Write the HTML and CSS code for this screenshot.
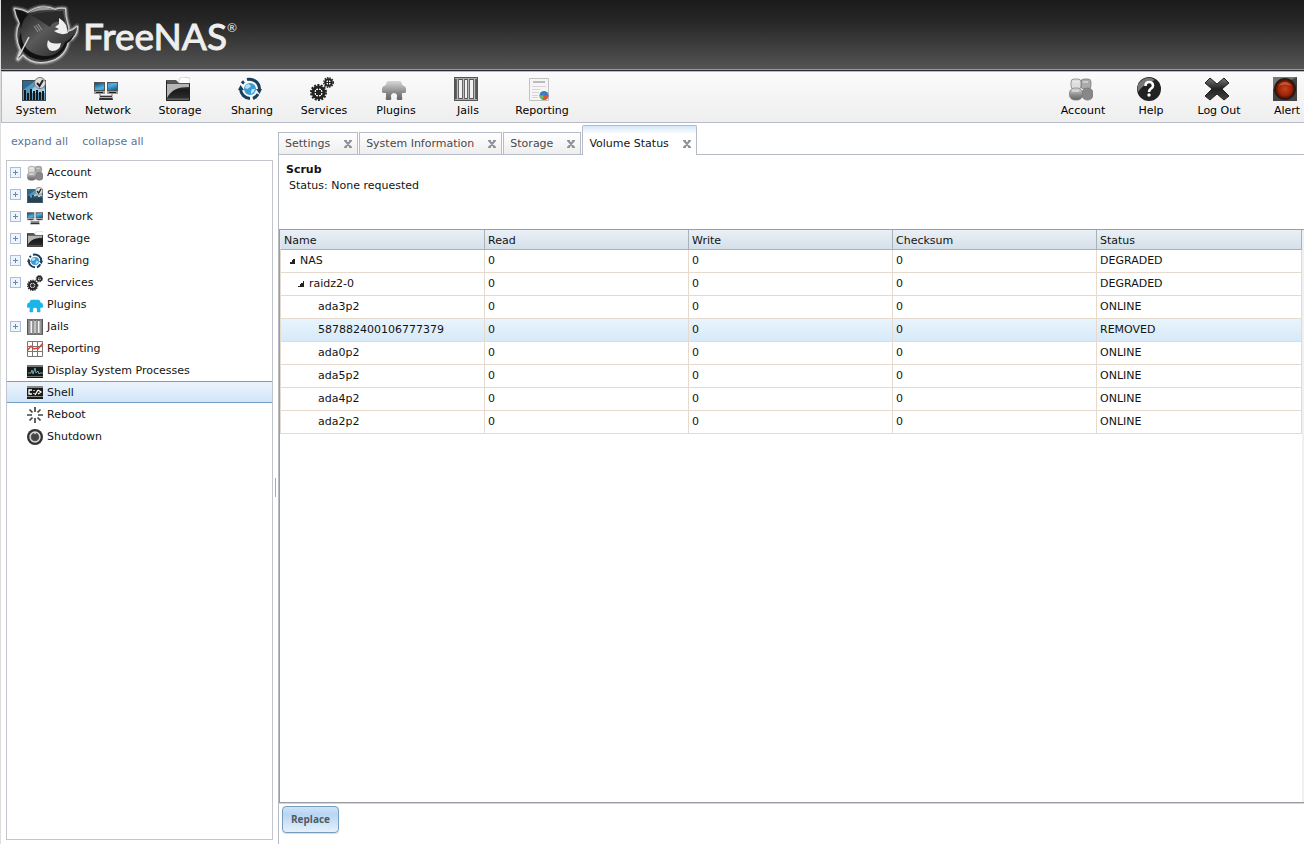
FILE: index.html
```html
<!DOCTYPE html>
<html lang="en">
<head>
    <meta charset="UTF-8">
    <meta name="viewport" content="width=device-width, initial-scale=1.0">
    <title>FreeNAS - Volume Status</title>
    <link rel="stylesheet" href="styles.css">
</head>
<body>
    <!-- Icon sprite -->
    <svg class="sprite" aria-hidden="true">
        <defs>
            <linearGradient id="gDark" x1="0" y1="0" x2="0" y2="1"><stop offset="0" stop-color="#777"/><stop offset=".5" stop-color="#222"/><stop offset="1" stop-color="#444"/></linearGradient>
            <linearGradient id="gGrey" x1="0" y1="0" x2="0" y2="1"><stop offset="0" stop-color="#d8d8d8"/><stop offset=".6" stop-color="#8a8a8a"/><stop offset="1" stop-color="#666"/></linearGradient>
            <linearGradient id="gBlue" x1="0" y1="0" x2="1" y2="1"><stop offset="0" stop-color="#0d4a70"/><stop offset=".5" stop-color="#4fb2e4"/><stop offset="1" stop-color="#0b5c92"/></linearGradient>
            <linearGradient id="gFolder" x1="0" y1="0" x2="0" y2="1"><stop offset="0" stop-color="#555"/><stop offset=".4" stop-color="#1a1a1a"/><stop offset=".8" stop-color="#2a2a2a"/><stop offset="1" stop-color="#888"/></linearGradient>
            <radialGradient id="gRed"><stop offset="0" stop-color="#c8401c"/><stop offset=".7" stop-color="#9c2408"/><stop offset="1" stop-color="#4a0e02"/></radialGradient>
            <linearGradient id="gFish" x1="0" y1="0" x2="1" y2="1"><stop offset="0" stop-color="#161616"/><stop offset=".45" stop-color="#5a5a5a"/><stop offset="1" stop-color="#1a1a1a"/></linearGradient>
        </defs>
        <symbol id="i-system" viewBox="0 0 24 24">
            <path fill="#3a4852" d="M0 3h24v21H0z"/>
            <path fill="#5596bd" d="M1 4h22v19H1z"/>
            <path fill="#2c6a92" d="M1 4h12L1 13z"/>
            <path fill="#9dcbe4" d="M9 13l7-6 7 5v4H9z"/>
            <path stroke="#14181b" stroke-width="2" d="M3 13v10M6 16v7M9 12v11M12 14v9M15 13v10M18 15v8M21 14v9"/>
            <circle cx="18" cy="6" r="5.500" fill="#dedede" stroke="#777"/>
            <path fill="none" stroke="#222" stroke-width="2" d="M15 6l2.500 3L21 3"/>
        </symbol>
        <symbol id="i-network" viewBox="0 0 24 24">
            <path fill="#555" d="M0 5h11v9H0zM13 5h11v9H13z"/>
            <path fill="url(#gBlue)" d="M1 6h9v7H1zM14 6h9v7h-9z"/>
            <path fill="#999" d="M0 14h11v3H0zM13 14h11v3H13z"/>
            <path fill="#222" d="M2 15h7v1H2zM15 15h7v1h-7z"/>
            <path fill="none" stroke="#777" d="M6 17v2h12v-2"/>
            <path fill="#333" d="M6 19h12l1 4H5z"/><path fill="#aaa" d="M6 20h12v1H6z"/>
        </symbol>
        <symbol id="i-storage" viewBox="0 0 24 24">
            <path fill="#555" d="M0 3h10l3 3v4H0z"/>
            <path fill="#fff" stroke="#aaa" stroke-width=".5" d="M13 2l3-2 8 1v7H13z"/>
            <path fill="url(#gFolder)" d="M0 6h24v18H0z"/>
            <path fill="#b5b5b5" d="M1 7h22v3C12 10 5 13 1 21z"/>
            <path fill="none" stroke="#222" d="M.5 4v19.500h23V6.500"/>
        </symbol>
        <symbol id="i-sharing" viewBox="0 0 24 24">
            <g fill="none" stroke="#173f5c" stroke-width="3">
                <path d="M9 2.500A10 10 0 0 1 21.500 12"/><path d="M15 21.500A10 10 0 0 0 20 17"/><path d="M12 21.500A10 10 0 0 1 2.500 12"/><path d="M4 6.500A10 10 0 0 1 6 4.500"/>
            </g>
            <path fill="#173f5c" d="M18 12h6l-2.500 5zM0 13h6L2.500 8z"/>
            <circle cx="12" cy="12" r="6" fill="#3a9ad2"/>
            <path fill="#b9e2f6" d="M8 8l3-1 2 2-2 2-2 1-2-1zM14 12l3 0-1 3-3 2 0-3z"/>
        </symbol>
        <symbol id="i-services" viewBox="0 0 24 24">
            <g fill="none" stroke="#222">
                <circle cx="8.500" cy="15.500" r="7.500" stroke-width="2" stroke-dasharray="2 1.400"/>
                <circle cx="8.500" cy="15.500" r="5.500" stroke-width="3"/>
                <circle cx="8.500" cy="15.500" r="2" stroke-width="1.500"/>
                <path d="M8.500 10v11M3 15.500h11M5 12l7 7M12 12l-7 7"/>
                <circle cx="18.500" cy="5.500" r="4.700" stroke-width="1.500" stroke-dasharray="1.500 1"/>
                <circle cx="18.500" cy="5.500" r="3.300" stroke-width="2"/>
                <path d="M18.500 3v5M16 5.500h5"/>
            </g>
        </symbol>
        <symbol id="i-plugins" viewBox="0 0 24 24">
            <path d="M4 8q0-4 3-4h10q3 0 3 4 4 1 4 4v3q0 1-2 1h-2v4q1 3-1 3h-3q-2 0-1-3v-2q-1-2-3-2t-3 2v2q1 3-1 3H5q-2 0-1-3v-4H2q-2 0-2-1v-3q0-3 4-4z"/>
        </symbol>
        <symbol id="i-jails" viewBox="0 0 24 24">
            <path fill="#555" d="M0 0h24v24H0z"/><path fill="#f2f2f2" d="M2 3h20v18H2z"/>
            <path stroke="#666" stroke-width="3" d="M3.500 2v20M9.500 2v20M14.500 2v20M20.500 2v20"/>
            <path stroke="#bbb" d="M3.500 2v20M9.500 2v20M14.500 2v20M20.500 2v20"/>
            <path stroke="#aaa" d="M1 1.500h22M1 22.500h22"/>
        </symbol>
        <symbol id="i-report" viewBox="0 0 24 24">
            <path fill="#f5f5f5" stroke="#c2c2c2" d="M1.500 1.500h19v22h-19z"/>
            <path stroke="#bbb" stroke-width="2" d="M5 5h12"/>
            <path stroke="#d5d5d5" d="M4 9.500h14M4 12.500h8M4 15.500h7M4 18.500h6M4 20.500h6"/>
            <circle cx="16" cy="18.500" r="4.500" fill="#3d7cc4"/><path fill="#e0552d" d="M16 18.500h4.500a4.500 4.500 0 0 1-6 4.200z"/><path fill="#74b854" d="M16 18.500l-1.500 4.200a4.500 4.500 0 0 1-3-4.200z"/>
        </symbol>
        <symbol id="i-account" viewBox="0 0 24 24">
            <g stroke="#777" stroke-width=".7">
                <rect x="12" y="2" width="10" height="10" rx="3" fill="#aaa"/><rect x="13" y="11" width="11" height="12" rx="5" fill="#888"/>
                <rect x="2" y="2" width="10" height="10" rx="3" fill="#ddd"/><rect x="0.500" y="11" width="13" height="12" rx="5" fill="url(#gGrey)"/>
            </g>
            <path stroke="#eee" d="M4 5h6M14 5h5M3 14h7"/>
        </symbol>
        <symbol id="i-help" viewBox="0 0 24 24">
            <circle cx="12" cy="12" r="12" fill="#222"/>
            <path fill="#777" d="M1 15A11 11 0 0 1 18 3Q6 7 1 15z"/>
            <path fill="none" stroke="#fff" stroke-width="2.600" d="M8.500 9q0-4 3.700-4T16 8.500q0 2-2 3.200t-2 3.300"/><circle cx="12" cy="18" r="1.700" fill="#fff"/>
        </symbol>
        <symbol id="i-logout" viewBox="0 0 24 24">
            <path fill="url(#gDark)" stroke="#222" d="M5 1l7 6 7-6 5 5-7 6 7 7-5 4-7-6-7 6-5-4 7-7-7-6z"/>
        </symbol>
        <symbol id="i-alert" viewBox="0 0 24 24">
            <path fill="#444" d="M0 0h24v24H0z"/><path fill="#777" d="M0 0h24L0 12z"/>
            <circle cx="12" cy="12" r="11" fill="#261b18"/><circle cx="12" cy="12" r="9.500" fill="url(#gRed)"/>
            <path fill="#d8765a" opacity=".6" d="M5 9q7-8 14 0-7-3-14 0z"/>
        </symbol>
        <symbol id="i-graph" viewBox="0 0 16 16">
            <path fill="none" stroke="#777" d="M.5.5h15v15H.5zM5.500 0v16M10.500 0v16M0 5.500h16M0 10.500h16"/>
            <path fill="none" stroke="#e0432c" stroke-width="1.500" d="M0 10l4-5 3 3 3-1 1 1 5-6"/>
        </symbol>
        <symbol id="i-process" viewBox="0 0 16 16">
            <path fill="#1a1a1a" d="M0 2h16v13H0z"/><path fill="#777" d="M0 2h16v2H0zM0 13h16v1H0z"/>
            <path fill="none" stroke="#6fa9ab" d="M1 10h3l1-3 1 4 2-6 1 5 2-2 1 3 1-1h3"/>
        </symbol>
        <symbol id="i-shell" viewBox="0 0 16 16">
            <path fill="#1a1a1a" d="M0 1h16v13H0z"/><path fill="#888" d="M0 1h16v2H0zM0 11h16v1H0z"/>
            <path fill="none" stroke="#fff" stroke-width="1.300" d="M5 5H2v4h3M7 5v1M7 8v1M8 10l3-5M11 5l3 2-3 2"/>
        </symbol>
        <symbol id="i-reboot" viewBox="0 0 16 16">
            <path stroke="#444" stroke-width="1.700" d="M8 0v5M8 11v5M0 8h5M11 8h5M2.500 2.500l3 3M10.500 10.500l3 3M13.500 2.500l-3 3M5.500 10.500l-3 3"/>
        </symbol>
        <symbol id="i-shutdown" viewBox="0 0 16 16">
            <circle cx="8" cy="8" r="8" fill="#333"/><circle cx="8" cy="8" r="5" fill="#555" stroke="#ddd" stroke-width="1.400"/>
            <path stroke="#ddd" stroke-width="1.500" d="M8 3v4"/><circle cx="8" cy="8" r="3" fill="#444"/>
        </symbol>
        <symbol id="i-close" viewBox="0 0 8 8">
            <path d="M0 .5h3M5 .5h3M0 7.500h3M5 7.500h3M1.500 1l5 6M6.500 1l-5 6"/>
        </symbol>
    </svg>

    <div class="page">
        <header class="header">
            <svg class="logo" viewBox="0 0 68 64" aria-hidden="true">
                <defs>
                    <path id="fish" d="M4 7q8 1 13 4 13-9 27-3 5-2 10-1 0 7 2 14 2 5 1 9 5-1 9-5 0 9-9 14-4 20-27 21-11 0-18-8l-5 5 3-9q-7-15-1-27-4-7-5-14z"/>
                </defs>
                <g fill="none" stroke="#fff" stroke-linejoin="round">
                    <use href="#fish" stroke-width="7" opacity=".15"/>
                    <use href="#fish" stroke-width="4" opacity=".4"/>
                    <use href="#fish" stroke-width="2" opacity=".6"/>
                </g>
                <use href="#fish" fill="url(#gFish)"/>
                <!-- rim between the fins -->
                <path fill="#999" d="M18 11q12-9 25-3-12-1-25 3zM20 53q10 4 22 1-9 7-22-1z"/>
                <path fill="#111" d="M5 8q8 1 12 5-6 5-7 14-1-8-5-19zM10 30q0 14 10 20 10 6 22 3 9-4 12-13 5-2 9-8-2 7-7 9-5 15-24 17-18-1-23-14-2-7 1-14z"/>
                <path fill="#2a2a2a" d="M20 13q14-4 32-4 1 5 2 11-12-2-15 5-9-6-19-12z"/>
                <path fill="#eee" d="M48 16q5 3 7 7l2 8q-7 3-14-2l5-2-4-2 4-3zM37 38q3 5 13 3-1 8-9 8-7-2-4-11z"/>
                <path stroke="#999" d="M23 24l4 6M25 23l4 6M27 22l4 6"/>
                <path stroke="#ddd" stroke-width="1.500" d="M8 54l10-19"/>
            </svg>
            <h1 class="brand">FreeNAS<sup>®</sup></h1>
        </header>

        <nav class="toolbar">
            <div class="tool-group">
                <button class="tool"><svg><use href="#i-system"/></svg>System</button>
                <button class="tool"><svg><use href="#i-network"/></svg>Network</button>
                <button class="tool"><svg><use href="#i-storage"/></svg>Storage</button>
                <button class="tool"><svg><use href="#i-sharing"/></svg>Sharing</button>
                <button class="tool"><svg><use href="#i-services"/></svg>Services</button>
                <button class="tool"><svg fill="url(#gGrey)"><use href="#i-plugins"/></svg>Plugins</button>
                <button class="tool"><svg><use href="#i-jails"/></svg>Jails</button>
                <button class="tool tool-wide"><svg><use href="#i-report"/></svg>Reporting</button>
            </div>
            <div class="tool-group tool-group-right">
                <button class="tool"><svg><use href="#i-account"/></svg>Account</button>
                <button class="tool"><svg><use href="#i-help"/></svg>Help</button>
                <button class="tool"><svg><use href="#i-logout"/></svg>Log Out</button>
                <button class="tool"><svg><use href="#i-alert"/></svg>Alert</button>
            </div>
        </nav>

        <div class="main">
            <aside class="sidebar">
                <div class="tree-links">
                    <a href="#">expand all</a>
                    <a href="#">collapse all</a>
                </div>
                <ul class="tree">
                    <li><button class="expando" aria-label="Expand Account"></button><svg><use href="#i-account"/></svg>Account</li>
                    <li><button class="expando" aria-label="Expand System"></button><svg><use href="#i-system"/></svg>System</li>
                    <li><button class="expando" aria-label="Expand Network"></button><svg><use href="#i-network"/></svg>Network</li>
                    <li><button class="expando" aria-label="Expand Storage"></button><svg><use href="#i-storage"/></svg>Storage</li>
                    <li><button class="expando" aria-label="Expand Sharing"></button><svg><use href="#i-sharing"/></svg>Sharing</li>
                    <li><button class="expando" aria-label="Expand Services"></button><svg><use href="#i-services"/></svg>Services</li>
                    <li class="leaf"><svg fill="#1cb5e8"><use href="#i-plugins"/></svg>Plugins</li>
                    <li><button class="expando" aria-label="Expand Jails"></button><svg><use href="#i-jails"/></svg>Jails</li>
                    <li class="leaf"><svg><use href="#i-graph"/></svg>Reporting</li>
                    <li class="leaf"><svg><use href="#i-process"/></svg>Display System Processes</li>
                    <li class="leaf selected"><svg><use href="#i-shell"/></svg>Shell</li>
                    <li class="leaf"><svg><use href="#i-reboot"/></svg>Reboot</li>
                    <li class="leaf"><svg><use href="#i-shutdown"/></svg>Shutdown</li>
                </ul>
            </aside>

            <div class="splitter"><span class="splitter-thumb"></span></div>

            <section class="content">
                <div class="tabs">
                    <div class="tab">
                        <button class="tab-label">Settings</button>
                        <button class="tab-close" aria-label="Close Settings"><svg><use href="#i-close"/></svg></button>
                    </div>
                    <div class="tab">
                        <button class="tab-label">System Information</button>
                        <button class="tab-close" aria-label="Close System Information"><svg><use href="#i-close"/></svg></button>
                    </div>
                    <div class="tab">
                        <button class="tab-label">Storage</button>
                        <button class="tab-close" aria-label="Close Storage"><svg><use href="#i-close"/></svg></button>
                    </div>
                    <div class="tab active">
                        <button class="tab-label">Volume Status</button>
                        <button class="tab-close" aria-label="Close Volume Status"><svg><use href="#i-close"/></svg></button>
                    </div>
                </div>

                <div class="pane">
                    <div class="scrub">
                        <h2>Scrub</h2>
                        <p>Status: None requested</p>
                    </div>

                    <div class="grid">
                        <table class="grid-table">
                            <thead>
                                <tr><th>Name</th><th>Read</th><th>Write</th><th>Checksum</th><th>Status</th></tr>
                            </thead>
                            <tbody>
                                <tr><td class="level-0"><i class="arrow"></i>NAS</td><td>0</td><td>0</td><td>0</td><td>DEGRADED</td></tr>
                                <tr><td class="level-1"><i class="arrow"></i>raidz2-0</td><td>0</td><td>0</td><td>0</td><td>DEGRADED</td></tr>
                                <tr><td class="level-2">ada3p2</td><td>0</td><td>0</td><td>0</td><td>ONLINE</td></tr>
                                <tr class="selected"><td class="level-2">587882400106777379</td><td>0</td><td>0</td><td>0</td><td>REMOVED</td></tr>
                                <tr><td class="level-2">ada0p2</td><td>0</td><td>0</td><td>0</td><td>ONLINE</td></tr>
                                <tr><td class="level-2">ada5p2</td><td>0</td><td>0</td><td>0</td><td>ONLINE</td></tr>
                                <tr><td class="level-2">ada4p2</td><td>0</td><td>0</td><td>0</td><td>ONLINE</td></tr>
                                <tr><td class="level-2">ada2p2</td><td>0</td><td>0</td><td>0</td><td>ONLINE</td></tr>
                            </tbody>
                        </table>
                    </div>

                    <div class="actions">
                        <button class="btn">Replace</button>
                    </div>
                </div>
            </section>
        </div>
    </div>
</body>
</html>
```

FILE: styles.css
```css
/* Reset and Base Styles */
* {
    margin: 0;
    padding: 0;
    box-sizing: border-box;
}

body {
    background: #fff;
    color: #131313;
    font-family: Verdana, "DejaVu Sans", sans-serif;
    font-size: 11px;
    line-height: 16px;
}

button {
    font: inherit;
    color: inherit;
    background: none;
    border: none;
    cursor: pointer;
}

.sprite {
    position: absolute;
    width: 0;
    height: 0;
}

.page {
    display: flex;
    flex-direction: column;
    height: 100vh;
    overflow: hidden;
    border-left: 1px solid #ddd;
}

/* Header */
.header {
    display: flex;
    height: 71px;
    flex-shrink: 0;
    padding: 2px 10px;
    background: linear-gradient(#1b1b1b, #262626 30%, #555);
    border-bottom: 1px solid #2b2b33;
    box-shadow: inset 0 -1px #999;
}

.logo {
    width: 68px;
    height: 64px;
}

.brand {
    margin-left: 4px;
    color: #eee;
    font-family: Lato, sans-serif;
    font-size: 37px;
    font-weight: 400;
    line-height: 68px;
    -webkit-text-stroke: 1px #eee;
}

.brand sup {
    font-size: 12px;
    line-height: 12px;
    vertical-align: 18px;
    -webkit-text-stroke: 0;
}

/* Toolbar */
.toolbar {
    display: flex;
    justify-content: space-between;
    height: 52px;
    flex-shrink: 0;
    background: linear-gradient(#fbfbfb, #eee);
    border: 1px solid #b5bcc7;
    border-right: none;
}

.tool-group {
    display: flex;
    margin-left: -2px;
}

.tool-group-right {
    margin-right: -17px;
}

.tool {
    display: flex;
    flex-direction: column;
    align-items: center;
    width: 72px;
    padding-top: 5px;
    color: #000;
}

.tool-wide {
    width: 76px;
}

.tool-group-right .tool {
    width: 68px;
}

.tool svg {
    width: 24px;
    height: 24px;
    margin: 0 4px 2px 0;
}

/* Sidebar */
.main {
    display: flex;
    flex: 1;
    min-height: 0;
}

.sidebar {
    display: flex;
    flex-direction: column;
    width: 272px;
    padding: 11px 0 4px 5px;
}

.tree-links {
    display: flex;
    gap: 14px;
    padding: 0 5px;
    margin-bottom: 10px;
}

.tree-links a {
    color: #5d7596;
    text-decoration: none;
}

.tree {
    flex: 1;
    list-style: none;
    border: 1px solid #c4c4cc;
}

.tree li {
    display: flex;
    height: 22px;
    padding: 4px 0 2px 3px;
}

.tree li.leaf {
    padding-left: 20px;
}

.tree li.selected {
    background: linear-gradient(#edf5fd, #cfe4f8);
    box-shadow: inset 0 1px #759dc0, inset 0 -1px #759dc0;
}

.tree svg {
    width: 16px;
    height: 16px;
    margin-right: 4px;
}

.expando {
    width: 11px;
    height: 11px;
    margin: 2px 6px 0 0;
    border: 1px solid #a9bedb;
    background: linear-gradient(#6d87ab, #6d87ab) center / 5px 1px no-repeat,
        linear-gradient(#6d87ab, #6d87ab) center / 1px 5px no-repeat,
        #eef4fb;
}

.splitter {
    display: flex;
    align-items: center;
    width: 5px;
    padding: 8px 0 0 2px;
}

.splitter-thumb {
    width: 1px;
    height: 19px;
    background: #aaa;
}

/* Tabs */
.content {
    display: flex;
    flex: 1;
    flex-direction: column;
    min-width: 0;
}

.tabs {
    display: flex;
    align-items: flex-end;
    gap: 1px;
    height: 32px;
    border-bottom: 1px solid #b5bcc7;
}

.tab {
    display: flex;
    align-items: center;
    gap: 14px;
    height: 22px;
    padding: 0 5px 0 6px;
    color: #494949;
    background: linear-gradient(#fff, #eee);
    border: 1px solid #b5bcc7;
    border-bottom: none;
}

.tab.active {
    height: 30px;
    margin-bottom: -1px;
    padding-top: 6px;
    color: #131313;
    background: linear-gradient(#d5e8f8, #fff 8px);
    border-radius: 2px 2px 0 0;
}

.tab-close {
    width: 8px;
    height: 10px;
}

.tab-close svg {
    display: block;
    width: 8px;
    height: 8px;
    fill: none;
    stroke: #8d949c;
    stroke-width: 2;
}

/* Volume Status */
.pane {
    display: flex;
    flex: 1;
    flex-direction: column;
    border-left: 1px solid #b5bcc7;
}

.scrub {
    padding: 7px 7px 35px;
}

.scrub h2 {
    font-size: 11px;
}

.scrub p {
    padding-left: 3px;
}

.grid {
    flex: 1;
    padding-right: 2px;
    background: linear-gradient(#f0f0f0, #f0f0f0) right / 2px 100% no-repeat;
    border: 1px solid #9a9ca3;
    border-right: none;
    box-shadow: 0 1px #d5d5d5;
}

.grid-table {
    width: 100%;
    table-layout: fixed;
    border-spacing: 0;
}

.grid-table th,
.grid-table td {
    padding: 0 3px;
    text-align: left;
    font-weight: normal;
}

.grid-table th {
    width: 204px;
    height: 20px;
    padding-top: 2px;
    background: linear-gradient(#eaf0f6, #d5e0e9);
    border-left: 1px solid #a9b1bb;
    border-bottom: 1px solid #a9b1bb;
}

.grid-table th:first-child {
    border-left-color: #e3eaf1;
}

.grid-table th:last-child {
    width: auto;
    border-right: 1px solid #a9b1bb;
}

.grid-table td {
    height: 23px;
    padding-bottom: 1px;
    border-left: 1px solid #e5dacd;
    border-bottom: 1px solid #e5dacd;
}

.grid-table td:last-child {
    border-right: 1px solid #e5dacd;
}

.grid-table tr.selected td {
    background: linear-gradient(#e9f4fd, #d6e9f8);
}

.grid-table .level-0 {
    padding-left: 8px;
}

.grid-table .level-1 {
    padding-left: 17px;
}

.grid-table .level-2 {
    padding-left: 37px;
}

.arrow {
    display: inline-block;
    width: 6px;
    height: 6px;
    margin-right: 5px;
    background: linear-gradient(135deg, transparent 50%, #222 50%);
}

/* Buttons */
.actions {
    height: 41px;
    padding: 3px;
}

.btn {
    height: 27px;
    padding: 0 8px 2px;
    color: #4d5a66;
    font-family: "Open Sans", sans-serif;
    font-size: 10px;
    font-weight: bold;
    background: linear-gradient(#cfe3f8, #b8d5f1 30%, #e6f1fc);
    border: 1px solid #759dc0;
    border-radius: 4px;
    box-shadow: 0 1px 1px rgba(0, 0, 0, 0.15);
}
```
